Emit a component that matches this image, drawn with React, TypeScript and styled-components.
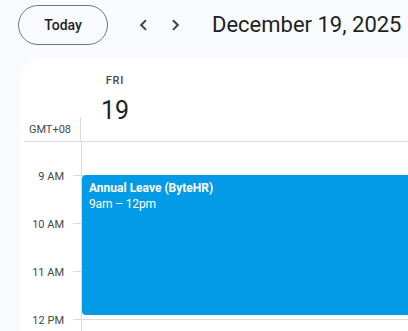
import { createGlobalStyle } from "styled-components";
import styled from "styled-components";

const GlobalStyle = createGlobalStyle`
  html, body {
    margin: 0;
    padding: 0;
    background: #f8fafd;
    font-family: Roboto, "Noto Sans", Arial, sans-serif;
    overflow: hidden;
  }
`;

const HOURS = ["9 AM", "10 AM", "11 AM", "12 PM"];
const HOUR_HEIGHT = 48;
// part of the 8 AM hour that is still visible after scrolling
const LEAD = 33;

const StPage = styled.div`
  width: 408px;
  height: 331px;
  display: flex;
  flex-direction: column;
  background: #f8fafd;
  overflow: hidden;
`;

const StTopBar = styled.header`
  height: 58px;
  flex: none;
  display: flex;
  align-items: flex-start;
  padding: 5px 0 0 18px;
  box-sizing: border-box;
`;

const StTodayButton = styled.button`
  width: 90px;
  height: 40px;
  border: 1px solid #747775;
  border-radius: 20px;
  background: transparent;
  font-family: inherit;
  font-size: 14px;
  font-weight: 500;
  color: #1f1f1f;
  cursor: pointer;
`;

const StNav = styled.div`
  display: flex;
  align-items: center;
  gap: 11px;
  margin-left: 24px;
  height: 40px;
`;

const StNavButton = styled.button`
  width: 22px;
  height: 22px;
  padding: 0;
  border: none;
  background: none;
  display: flex;
  align-items: center;
  justify-content: center;
  color: #444746;
`;

const StTitle = styled.h1`
  margin: 0 0 0 25px;
  height: 40px;
  line-height: 40px;
  font-size: 22px;
  font-weight: 400;
  color: #1f1f1f;
  white-space: nowrap;
`;

const StPanel = styled.main`
  flex: 1;
  margin-left: 20px;
  background: #fff;
  border-top-left-radius: 24px;
  display: flex;
  flex-direction: column;
  overflow: hidden;
`;

const StHeader = styled.div`
  height: 83px;
  flex: none;
  display: flex;
  border-bottom: 1px solid #dadce0;
  margin-left: 4px;
`;

const StHeaderGutter = styled.div`
  width: 57px;
  flex: none;
  display: flex;
  flex-direction: column;
  justify-content: flex-end;
  align-items: flex-end;
  padding: 0 9px 5px 0;
  box-sizing: border-box;
  border-right: 1px solid #dadce0;
  border-image: linear-gradient(to bottom, transparent 59px, #dadce0 59px) 1;
`;

const StZone = styled.span`
  font-size: 11px;
  color: #444746;
  white-space: nowrap;
`;

const StDay = styled.div`
  width: 44px;
  margin-left: 12px;
  display: flex;
  flex-direction: column;
  align-items: center;
  padding-top: 16px;
`;

const StDayName = styled.span`
  font-size: 11px;
  font-weight: 500;
  letter-spacing: 0.8px;
  color: #4a4458;
  line-height: 14px;
`;

const StDayNumber = styled.span`
  font-size: 25px;
  color: #1f1f1f;
  line-height: 32px;
  margin-top: 7px;
`;

const StBody = styled.div`
  flex: 1;
  display: flex;
  overflow: hidden;
`;

const StGutter = styled.div`
  width: 61px;
  flex: none;
  display: flex;
  flex-direction: column;
  border-right: 1px solid #dadce0;
`;

const StGutterLead = styled.div`
  height: ${LEAD}px;
  flex: none;
`;

const StHourCell = styled.div`
  height: ${HOUR_HEIGHT}px;
  flex: none;
  display: flex;
  align-items: flex-start;
  justify-content: flex-end;
`;

const StHourLabel = styled.span`
  font-size: 11px;
  color: #444746;
  line-height: 14px;
  margin-top: -5px;
  margin-right: 9px;
  white-space: nowrap;
`;

const StTick = styled.span`
  width: 8px;
  height: 1px;
  background: #dadce0;
`;

const StColumn = styled.div`
  flex: 1;
  position: relative;
  display: flex;
  flex-direction: column;
`;

const StHourSlot = styled.div<{ $lead?: boolean }>`
  height: ${(p) => (p.$lead ? LEAD : HOUR_HEIGHT)}px;
  flex: none;
  border-top: ${(p) => (p.$lead ? "none" : "1px solid #dadce0")};
  box-sizing: border-box;
`;

const StEvent = styled.div<{ $start: number; $span: number }>`
  position: absolute;
  left: 0;
  right: -12px;
  top: ${(p) => LEAD + p.$start * HOUR_HEIGHT}px;
  height: ${(p) => p.$span * HOUR_HEIGHT - 4}px;
  background: #039be5;
  border-radius: 4px;
  padding: 5px 7px;
  box-sizing: border-box;
  color: #fff;
  font-size: 12px;
  line-height: 16px;
`;

const StEventTitle = styled.div`
  font-weight: 700;
`;

const StEventTime = styled.div`
  letter-spacing: -0.15px;
`;

function Chevron({ dir }: { dir: "left" | "right" }) {
  return (
    <svg width="22" height="22" viewBox="0 0 24 24" fill="none">
      <path
        d={dir === "left" ? "M14.5 7.5 L10 12 L14.5 16.5" : "M9.5 7.5 L14 12 L9.5 16.5"}
        stroke="currentColor"
        strokeWidth="2.3"
        strokeLinecap="square"
      />
    </svg>
  );
}

export default function App() {
  return (
    <>
      <GlobalStyle />
      <StPage>
        <StTopBar>
          <StTodayButton>Today</StTodayButton>
          <StNav>
            <StNavButton aria-label="Previous day">
              <Chevron dir="left" />
            </StNavButton>
            <StNavButton aria-label="Next day">
              <Chevron dir="right" />
            </StNavButton>
          </StNav>
          <StTitle>December 19, 2025</StTitle>
        </StTopBar>
        <StPanel>
          <StHeader>
            <StHeaderGutter>
              <StZone>GMT+08</StZone>
            </StHeaderGutter>
            <StDay>
              <StDayName>FRI</StDayName>
              <StDayNumber>19</StDayNumber>
            </StDay>
          </StHeader>
          <StBody>
            <StGutter>
              <StGutterLead />
              {HOURS.map((h) => (
                <StHourCell key={h}>
                  <StHourLabel>{h}</StHourLabel>
                  <StTick />
                </StHourCell>
              ))}
            </StGutter>
            <StColumn>
              <StHourSlot $lead />
              {HOURS.map((h) => (
                <StHourSlot key={h} />
              ))}
              <StEvent $start={0} $span={3}>
                <StEventTitle>Annual Leave (ByteHR)</StEventTitle>
                <StEventTime>9am – 12pm</StEventTime>
              </StEvent>
            </StColumn>
          </StBody>
        </StPanel>
      </StPage>
    </>
  );
}
